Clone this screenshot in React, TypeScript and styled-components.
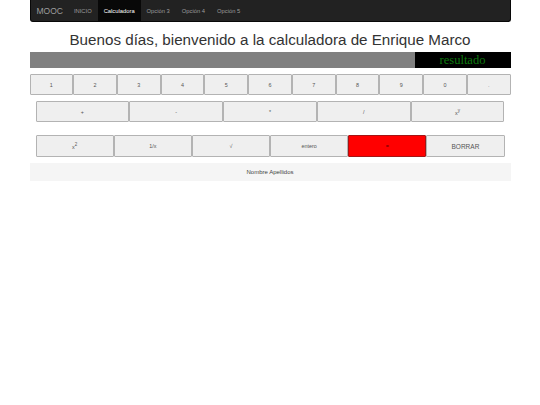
import styled, {createGlobalStyle} from 'styled-components';

const GlobalStyle = createGlobalStyle`
  body {
    margin: 0;
    background: #ffffff;
    font-family: 'Liberation Sans', Arial, sans-serif;
    color: #333333;
  }
`;

const Container = styled.div`
  width: 481px;
  margin: 0 auto;
`;

const NavBar = styled.nav`
  height: 22px;
  background: #222222;
  border: 1px solid #080808;
  border-top: none;
  border-radius: 0 0 3px 3px;
  display: flex;
  align-items: stretch;
  box-sizing: border-box;
  padding-left: 6px;
`;

const Brand = styled.span`
  display: flex;
  align-items: center;
  font-size: 8.5px;
  color: #9d9d9d;
  padding-right: 5px;
`;

const NavLink = styled.span<{ $active?: boolean }>`
  display: flex;
  align-items: center;
  font-size: 5.8px;
  padding: 0 6px;
  color: ${p => (p.$active ? '#ffffff' : '#9d9d9d')};
  background: ${p => (p.$active ? '#080808' : 'transparent')};
`;

const Title = styled.h1`
  margin: 8px 0 2px;
  font-size: 15.2px;
  font-weight: normal;
  text-align: center;
  line-height: 20px;
  color: #333333;
`;

const Display = styled.div`
  display: flex;
  height: 16px;
`;

const Screen = styled.div`
  flex: 1;
  background: #808080;
`;

const Result = styled.div`
  width: 96px;
  background: #000000;
  color: #0c7a0c;
  font-family: 'Liberation Serif', 'Times New Roman', serif;
  font-size: 12.5px;
  line-height: 16px;
  text-align: center;
`;

const Row = styled.div<{ $inset?: number; $top?: number; $height?: number }>`
  display: flex;
  height: ${p => p.$height ?? 21}px;
  margin-top: ${p => p.$top ?? 6}px;
  padding: 0 ${p => p.$inset ?? 0}px;
`;

const Key = styled.button<{ $danger?: boolean; $big?: boolean }>`
  flex: 1;
  min-width: 0;
  margin: 0;
  padding: 0;
  background: ${p => (p.$danger ? '#ff0000' : '#efefef')};
  border: 1px solid ${p => (p.$danger ? '#a31515' : '#b3b3b3')};
  border-radius: 1px;
  font-family: 'Liberation Sans', Arial, sans-serif;
  font-size: ${p => (p.$big ? '6.5px' : '5.4px')};
  color: ${p => (p.$danger ? '#550000' : '#555555')};
`;

const Footer = styled.footer`
  margin-top: 6px;
  height: 18px;
  background: #f5f5f5;
  display: flex;
  align-items: center;
  justify-content: center;
  font-size: 6px;
  color: #444444;
`;

const digits = ['1', '2', '3', '4', '5', '6', '7', '8', '9', '0', '.'];
const ops = ['+', '-', '*', '/'];

const App = () => (
    <>
        <GlobalStyle/>
        <Container>
            <NavBar>
                <Brand>MOOC</Brand>
                <NavLink>INICIO</NavLink>
                <NavLink $active>Calculadora</NavLink>
                <NavLink>Opción 3</NavLink>
                <NavLink>Opción 4</NavLink>
                <NavLink>Opción 5</NavLink>
            </NavBar>
            <Title>Buenos días, bienvenido a la calculadora de Enrique Marco</Title>
            <Display>
                <Screen/>
                <Result>resultado</Result>
            </Display>
            <Row>
                {digits.map(d => <Key key={d}>{d}</Key>)}
            </Row>
            <Row $inset={6}>
                {ops.map(o => <Key key={o}>{o}</Key>)}
                <Key>x<sup>y</sup></Key>
            </Row>
            <Row $inset={6} $top={13} $height={22}>
                <Key>x<sup>2</sup></Key>
                <Key>1/x</Key>
                <Key>√</Key>
                <Key>entero</Key>
                <Key $danger>=</Key>
                <Key $big>BORRAR</Key>
            </Row>
            <Footer>Nombre Apellidos</Footer>
        </Container>
    </>
);

export default App;
